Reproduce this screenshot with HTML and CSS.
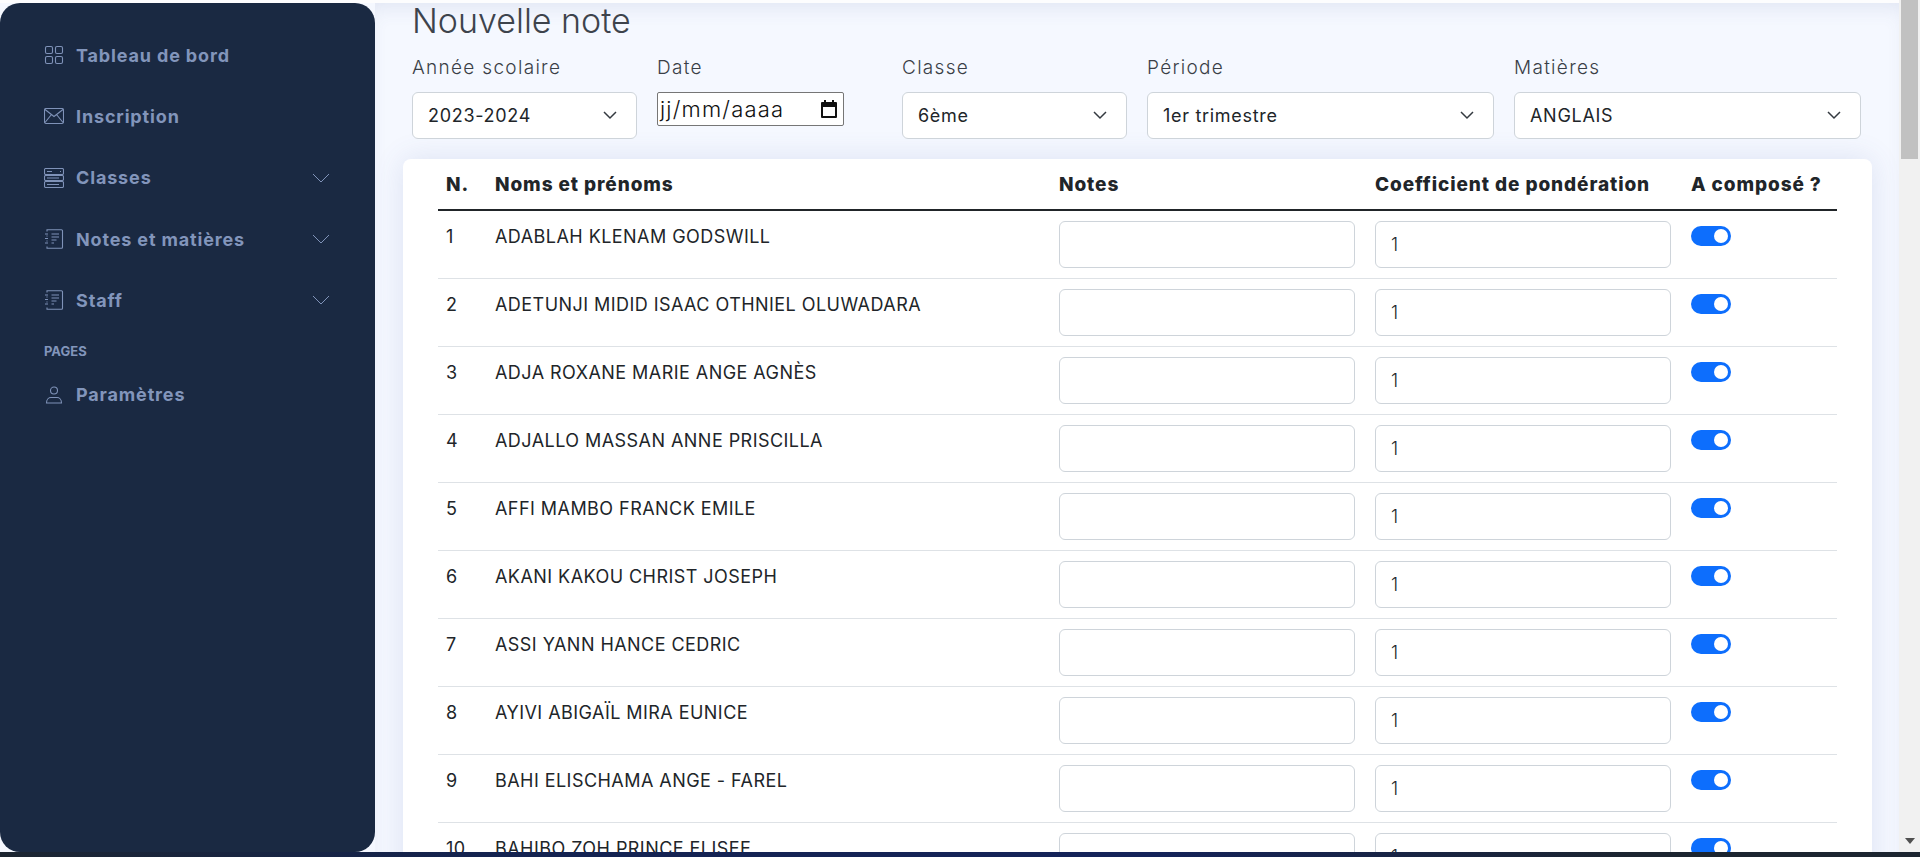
FILE: index.html
```html
<!DOCTYPE html>
<html lang="fr">
<head>
<meta charset="utf-8">
<title>Nouvelle note</title>
<link rel="stylesheet" href="styles.css">
</head>
<body>
<div class="app">
  <div class="workspace">
    <div class="page">
      <div class="strip"></div>
      <div class="body">
        <aside class="sidebar">
          <a class="nav-item">
            <svg class="nav-icon" viewBox="0 0 20 20"><rect x="1.500" y="1.500" width="7" height="7" rx="1.500"/><rect x="11.500" y="1.500" width="7" height="7" rx="1.500"/><rect x="1.500" y="11.500" width="7" height="7" rx="1.500"/><rect x="11.500" y="11.500" width="7" height="7" rx="1.500"/></svg>
            <span class="nav-label">Tableau de bord</span>
          </a>
          <a class="nav-item">
            <svg class="nav-icon" viewBox="0 0 20 20"><rect x="0.500" y="2.500" width="19" height="15" rx="1.500"/><path d="M1 3.500l9 7 9-7M1 16.500l6.500-8M19 16.500l-6.500-8"/></svg>
            <span class="nav-label">Inscription</span>
          </a>
          <a class="nav-item">
            <svg class="nav-icon" viewBox="0 0 20 20"><rect x="0.500" y="0.500" width="19" height="6" rx="1.200"/><rect x="0.500" y="7.500" width="19" height="5" rx="1.200"/><rect x="0.500" y="13.500" width="19" height="6" rx="1.200"/><path d="M3 3.500h5M16 3.500h1M3 10h12M3 16.500h12"/></svg>
            <span class="nav-label">Classes</span>
            <svg class="nav-chevron" viewBox="0 0 18 10"><path d="M1 1l8 8 8-8"/></svg>
          </a>
          <a class="nav-item">
            <svg class="nav-icon" viewBox="0 0 20 20"><path d="M3 2.500V.800h14.500a1 1 0 0 1 1 1v16.400a1 1 0 0 1-1 1H3v-1.700M3 6.500v1M3 11.500v1"/><path d="M1 5h3M1 9.500h3M1 14h3M7.500 5h7.500M7.500 8h7.500M7.500 11h5M7.500 14h2.500"/></svg>
            <span class="nav-label">Notes et matières</span>
            <svg class="nav-chevron" viewBox="0 0 18 10"><path d="M1 1l8 8 8-8"/></svg>
          </a>
          <a class="nav-item">
            <svg class="nav-icon" viewBox="0 0 20 20"><path d="M3 2.500V.800h14.500a1 1 0 0 1 1 1v16.400a1 1 0 0 1-1 1H3v-1.700M3 6.500v1M3 11.500v1"/><path d="M1 5h3M1 9.500h3M1 14h3M7.500 5h7.500M7.500 8h7.500M7.500 11h5M7.500 14h2.500"/></svg>
            <span class="nav-label">Staff</span>
            <svg class="nav-chevron" viewBox="0 0 18 10"><path d="M1 1l8 8 8-8"/></svg>
          </a>
          <div class="nav-heading">PAGES</div>
          <a class="nav-item">
            <svg class="nav-icon" viewBox="0 0 20 20"><circle cx="10" cy="5.500" r="3.500"/><path d="M2.500 18c0-3.800 2.500-5.500 4.500-5.500h6c2 0 4.500 1.700 4.500 5.500z"/></svg>
            <span class="nav-label">Paramètres</span>
          </a>
        </aside>
        <main class="main">
          <h1 class="title">Nouvelle note</h1>
          <form class="filters">
            <div class="field">
              <label class="field-label">Année scolaire</label>
              <div class="select-box"><select class="select"><option>2023-2024</option></select><svg class="select-arrow" viewBox="0 0 16 16"><path d="M2 5l6 6 6-6"/></svg></div>
            </div>
            <div class="field">
              <label class="field-label">Date</label>
              <div class="date-box"><span class="date-text">jj/mm/aaaa</span><svg class="date-icon" viewBox="0 0 20 20"><path class="date-icon-fill" d="M5 1h2v2h6V1h2v2h2a1 1 0 0 1 1 1v14a1 1 0 0 1-1 1H3a1 1 0 0 1-1-1V4a1 1 0 0 1 1-1h2zM4 8v9h12V8z"/></svg></div>
            </div>
            <div class="field">
              <label class="field-label">Classe</label>
              <div class="select-box"><select class="select"><option>6ème</option></select><svg class="select-arrow" viewBox="0 0 16 16"><path d="M2 5l6 6 6-6"/></svg></div>
            </div>
            <div class="field">
              <label class="field-label">Période</label>
              <div class="select-box"><select class="select"><option>1er trimestre</option></select><svg class="select-arrow" viewBox="0 0 16 16"><path d="M2 5l6 6 6-6"/></svg></div>
            </div>
            <div class="field">
              <label class="field-label">Matières</label>
              <div class="select-box"><select class="select"><option>ANGLAIS</option></select><svg class="select-arrow" viewBox="0 0 16 16"><path d="M2 5l6 6 6-6"/></svg></div>
            </div>
          </form>
          <section class="card">
            <table class="grades">
              <colgroup><col class="col-n"><col class="col-name"><col class="col-note"><col class="col-coef"><col class="col-done"></colgroup>
              <thead><tr><th>N.</th><th>Noms et prénoms</th><th>Notes</th><th>Coefficient de pondération</th><th>A composé ?</th></tr></thead>
              <tbody>
                <tr><td>1</td><td>ADABLAH KLENAM GODSWILL</td><td class="cell-input"><input class="input"></td><td class="cell-input"><input class="input" value="1"></td><td><span class="switch"></span></td></tr>
                <tr><td>2</td><td>ADETUNJI MIDID ISAAC OTHNIEL OLUWADARA</td><td class="cell-input"><input class="input"></td><td class="cell-input"><input class="input" value="1"></td><td><span class="switch"></span></td></tr>
                <tr><td>3</td><td>ADJA ROXANE MARIE ANGE AGNÈS</td><td class="cell-input"><input class="input"></td><td class="cell-input"><input class="input" value="1"></td><td><span class="switch"></span></td></tr>
                <tr><td>4</td><td>ADJALLO MASSAN ANNE PRISCILLA</td><td class="cell-input"><input class="input"></td><td class="cell-input"><input class="input" value="1"></td><td><span class="switch"></span></td></tr>
                <tr><td>5</td><td>AFFI MAMBO FRANCK EMILE</td><td class="cell-input"><input class="input"></td><td class="cell-input"><input class="input" value="1"></td><td><span class="switch"></span></td></tr>
                <tr><td>6</td><td>AKANI KAKOU CHRIST JOSEPH</td><td class="cell-input"><input class="input"></td><td class="cell-input"><input class="input" value="1"></td><td><span class="switch"></span></td></tr>
                <tr><td>7</td><td>ASSI YANN HANCE CEDRIC</td><td class="cell-input"><input class="input"></td><td class="cell-input"><input class="input" value="1"></td><td><span class="switch"></span></td></tr>
                <tr><td>8</td><td>AYIVI ABIGAÏL MIRA EUNICE</td><td class="cell-input"><input class="input"></td><td class="cell-input"><input class="input" value="1"></td><td><span class="switch"></span></td></tr>
                <tr><td>9</td><td>BAHI ELISCHAMA ANGE - FAREL</td><td class="cell-input"><input class="input"></td><td class="cell-input"><input class="input" value="1"></td><td><span class="switch"></span></td></tr>
                <tr><td>10</td><td>BAHIBO ZOH PRINCE ELISEE</td><td class="cell-input"><input class="input"></td><td class="cell-input"><input class="input" value="1"></td><td><span class="switch"></span></td></tr>
              </tbody>
            </table>
          </section>
        </main>
      </div>
    </div>
    <div class="scrollbar"><div class="scroll-thumb"></div><div class="scroll-down"></div></div>
  </div>
  <div class="taskbar"></div>
</div>
</body>
</html>
```

FILE: styles.css
```css
* { box-sizing: border-box; }
html, body { margin: 0; height: 100%; overflow: hidden; }
body { font-family: Inter, "Noto Sans", sans-serif; color: #212529; background: #f1f1f1; }

.app { height: 100vh; display: flex; flex-direction: column; }
.workspace { flex: 1; min-height: 0; display: flex; }
.page { flex: 1; min-width: 0; display: flex; flex-direction: column; }
.strip { height: 3px; background: #fdfdfe; flex: none; }
.body { flex: 1; min-height: 0; display: flex; background: #f5f8ff; }

.sidebar { width: 375px; flex: none; background: #1a2942; border-radius: 20px; padding-top: 21.5px; }
.nav-item { display: flex; align-items: center; height: 61.3px; padding: 0 45px 0 44px; color: #8295bb; }
.nav-icon { width: 20px; height: 20px; flex: none; fill: none; stroke: #7f92b8; stroke-width: 1.1; margin-right: 12px; }
.nav-label { flex: 1; font-size: 18px; font-weight: 700; letter-spacing: .85px; }
.nav-chevron { width: 18px; height: 10px; flex: none; fill: none; stroke: #8093b9; stroke-width: 1; }
.nav-heading { font-size: 13px; font-weight: 700; line-height: 18px; color: #8295bb; padding: 11px 0 4px 44px; }

.main { flex: 1; min-width: 0; overflow: hidden; box-shadow: inset 0 12px 20px -8px rgba(70, 90, 150, .12); }
.title { margin: 0 0 15px 37px; font-size: 34px; font-weight: 300; line-height: 36px; color: #3d434c; }
.filters { display: grid; grid-template-columns: 225px 225px 225px 347px 347px; column-gap: 20px; margin-left: 37px; }
.field-label { display: block; font-size: 19px; font-weight: 300; letter-spacing: 1.3px; line-height: 27px; margin-bottom: 11px; color: #3a3f47; }
.select-box { position: relative; }
.select { display: block; width: 100%; height: 47px; padding: 0 36px 0 15px; appearance: none; border: 1px solid #ced4da; border-radius: 6px; background: #fff; font: 400 18px Inter, sans-serif; letter-spacing: .7px; color: #212529; }
.select-arrow { position: absolute; right: 19px; top: 15px; width: 16px; height: 16px; fill: none; stroke: #343a40; stroke-width: 1.5; pointer-events: none; }
.date-box { display: flex; align-items: center; justify-content: space-between; width: 187px; height: 34px; padding: 0 4px 0 2px; background: #fff; border: 1px solid #767676; border-radius: 2px; }
.date-text { font-size: 22px; font-weight: 300; letter-spacing: 1.2px; color: #111; }
.date-icon { width: 20px; height: 20px; }
.date-icon-fill { fill: #111; fill-rule: evenodd; }

.card { margin: 20px 0 0 28px; width: 1469px; padding: 0 35px; background: #fff; border-radius: 8px 8px 0 0; box-shadow: 0 0 30px rgba(70, 90, 160, .14); }
.grades { width: 1399px; table-layout: fixed; border-collapse: collapse; font-size: 18px; letter-spacing: .45px; }
.col-n { width: 49px; }
.col-name { width: 564px; }
.col-note, .col-coef { width: 316px; }
.col-done { width: 154px; }
.grades th { text-align: left; padding: 10px 8px 10px; height: 51px; font-weight: 800; font-size: 19px; letter-spacing: .9px; line-height: 27px; white-space: nowrap; border-bottom: 2px solid #212529; }
.grades td { vertical-align: top; padding: 10px 8px 9px; height: 68px; line-height: 32px; font-weight: 400; color: #212529; border-bottom: 1px solid #dee2e6; }
.grades .cell-input { padding-right: 12px; }
.input { display: block; width: 100%; height: 47px; padding: 0 15px; border: 1px solid #ced4da; border-radius: 6px; background: #fff; font: 300 18px Inter, sans-serif; color: #212529; }
.switch { display: block; position: relative; width: 40px; height: 20px; margin-top: 5px; background: #0d6efd; border-radius: 10px; }
.switch::after { content: ""; position: absolute; right: 3px; top: 3px; width: 14px; height: 14px; border-radius: 50%; background: #fff; }

.scrollbar { width: 21px; flex: none; display: flex; flex-direction: column; background: #f1f1f1; padding: 0 2px; }
.scroll-thumb { height: 159px; background: #c1c1c1; }
.scroll-down { margin: auto 0 8px 4px; width: 0; height: 0; border-left: 5px solid transparent; border-right: 5px solid transparent; border-top: 6px solid #505050; }

.taskbar { height: 5px; flex: none; background: linear-gradient(90deg, #1c2530 0%, #142350 25%, #14235a 60%, #1c2530 85%); }
```
